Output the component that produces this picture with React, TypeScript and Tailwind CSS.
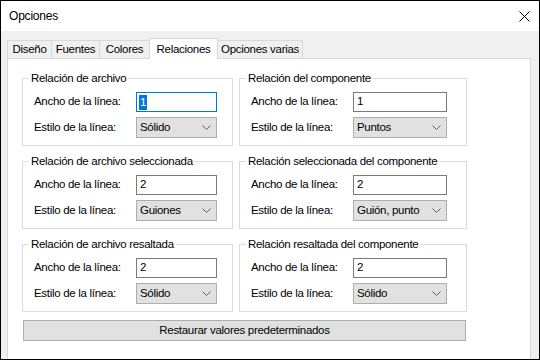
import React from "react";

function Chevron() {
  return (
    <svg width="9" height="6" viewBox="0 0 9 6" className="shrink-0">
      <path d="M0.5 0.5 L4.5 4.5 L8.5 0.5" fill="none" stroke="#606060" strokeWidth="1" />
    </svg>
  );
}

function Group({
  title,
  width,
  inputW,
  value,
  style,
  focused,
}: {
  title: string;
  width: string;
  inputW: string;
  value: string;
  style: string;
  focused?: boolean;
}) {
  return (
    <fieldset className={`border border-[#dcdcdc] ${width} p-0 pb-[7px]`}>
      <legend className="ml-[6px] px-[2px] leading-[15px] whitespace-nowrap">{title}</legend>
      <div className="pt-[6px] pl-[11px] flex flex-col">
        <div className="flex items-center h-[20px]">
          <div className="w-[102px] shrink-0 whitespace-nowrap">Ancho de la línea:</div>
          <div
            className={`${inputW} h-[20px] bg-white border ${
              focused ? "border-[#0078d7]" : "border-[#7a7a7a]"
            } flex items-center pl-[2px]`}
          >
            {focused ? (
              <span className="bg-[#0078d7] text-white px-[1px] leading-[15px]">{value}</span>
            ) : (
              <span className="px-[1px]">{value}</span>
            )}
          </div>
        </div>
        <div className="flex items-center h-[21px] mt-[5px]">
          <div className="w-[102px] shrink-0 whitespace-nowrap">Estilo de la línea:</div>
          <div
            className={`${inputW} h-[21px] bg-[#e1e1e1] border border-[#adadad] flex items-center justify-between pl-[3px] pr-[5px]`}
          >
            <span className="whitespace-nowrap">{style}</span>
            <Chevron />
          </div>
        </div>
      </div>
    </fieldset>
  );
}

export default function App() {
  return (
    <div className="w-[540px] h-[360px] border border-black bg-[#f0f0f0] flex flex-col overflow-hidden font-['Liberation_Sans',Arial,sans-serif] text-[11.5px] tracking-[-0.3px] text-black">
      <div className="h-[30px] bg-white flex items-center justify-between pl-[8px] pr-[9px] shrink-0">
        <span className="text-[12px] tracking-[-0.2px]">Opciones</span>
        <svg width="11" height="11" viewBox="0 0 11 11">
          <path d="M0.5 0.5 L10.5 10.5 M10.5 0.5 L0.5 10.5" stroke="#000" strokeWidth="1" fill="none" />
        </svg>
      </div>
      <div className="mt-[7px] pl-[6px] flex items-end h-[20px] shrink-0 whitespace-nowrap">
        <div className="w-[45px] h-[18px] border border-b-0 border-[#d9d9d9] bg-[#f0f0f0] flex items-center justify-center">
          Diseño
        </div>
        <div className="-ml-px w-[49px] h-[18px] border border-b-0 border-[#d9d9d9] bg-[#f0f0f0] flex items-center justify-center">
          Fuentes
        </div>
        <div className="-ml-px w-[51px] h-[18px] border border-b-0 border-[#d9d9d9] bg-[#f0f0f0] flex items-center justify-center">
          Colores
        </div>
        <div className="relative z-10 -ml-px -mb-px w-[69px] h-[21px] border border-b-0 border-[#d9d9d9] bg-white flex items-start justify-center pt-[2px]">
          Relaciones
        </div>
        <div className="-ml-px w-[86px] h-[18px] border border-b-0 border-[#d9d9d9] bg-[#f0f0f0] flex items-center justify-center">
          Opciones varias
        </div>
      </div>
      <div className="ml-[6px] w-[524px] flex-1 bg-white border border-b-0 border-[#d9d9d9] pl-[14px] pt-[12px]">
        <div className="grid grid-cols-[211px_228px] gap-x-[6px] gap-y-[8px]">
          <Group title="Relación de archivo" width="w-[211px]" inputW="w-[81px]" value="1" style="Sólido" focused />
          <Group title="Relación del componente" width="w-[228px]" inputW="w-[94px]" value="1" style="Puntos" />
          <Group title="Relación de archivo seleccionada" width="w-[211px]" inputW="w-[81px]" value="2" style="Guiones" />
          <Group title="Relación seleccionada del componente" width="w-[228px]" inputW="w-[94px]" value="2" style="Guión, punto" />
          <Group title="Relación de archivo resaltada" width="w-[211px]" inputW="w-[81px]" value="2" style="Sólido" />
          <Group title="Relación resaltada del componente" width="w-[228px]" inputW="w-[94px]" value="2" style="Sólido" />
        </div>
        <div className="ml-[1px] mt-[8px] w-[443px] h-[21px] bg-[#e1e1e1] border border-[#adadad] flex items-center justify-center whitespace-nowrap">
          Restaurar valores predeterminados
        </div>
      </div>
    </div>
  );
}
